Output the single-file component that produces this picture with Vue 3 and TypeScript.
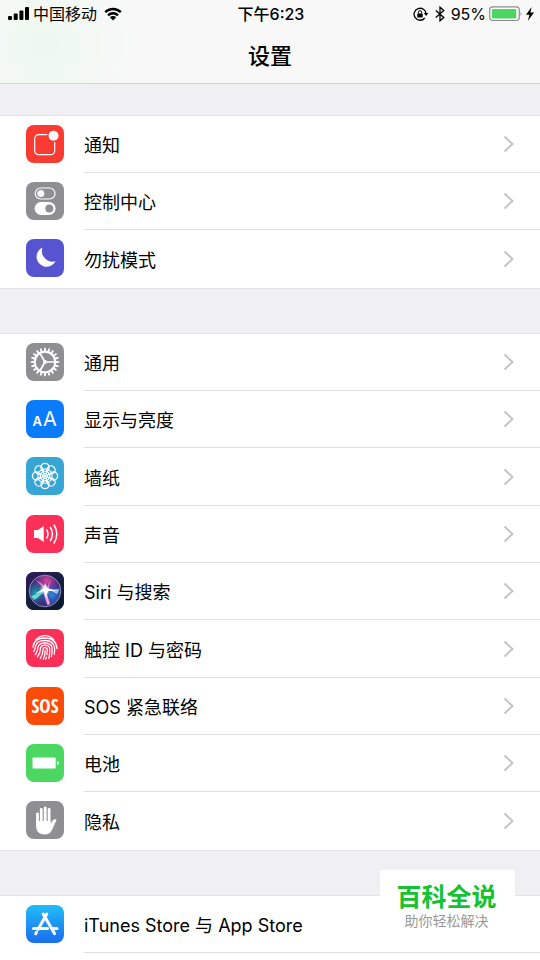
<script setup lang="ts">
type IconName =
  | 'notify' | 'control' | 'moon' | 'gear' | 'display' | 'wallpaper' | 'sound'
  | 'siri' | 'touch' | 'sos' | 'battery' | 'hand' | 'store'

interface Item {
  icon: IconName
  label: string
}

const groups: Item[][] = [
  [
    { icon: 'notify', label: '通知' },
    { icon: 'control', label: '控制中心' },
    { icon: 'moon', label: '勿扰模式' },
  ],
  [
    { icon: 'gear', label: '通用' },
    { icon: 'display', label: '显示与亮度' },
    { icon: 'wallpaper', label: '墙纸' },
    { icon: 'sound', label: '声音' },
    { icon: 'siri', label: 'Siri 与搜索' },
    { icon: 'touch', label: '触控 ID 与密码' },
    { icon: 'sos', label: 'SOS 紧急联络' },
    { icon: 'battery', label: '电池' },
    { icon: 'hand', label: '隐私' },
  ],
  [{ icon: 'store', label: 'iTunes Store 与 App Store' }],
]

const turns = (count: number): number[] =>
  Array.from({ length: count }, (_, i) => (i * 360) / count)

const teeth = turns(20)
const petals = turns(8)
</script>

<template>
  <div class="page">
    <header class="top">
      <div class="status">
        <div class="status-left">
          <svg class="signal" viewBox="0 0 22 14" aria-hidden="true">
            <rect x="0" y="9" width="4" height="4" rx="1" />
            <rect x="5.700" y="6.500" width="4" height="6.500" rx="1" />
            <rect x="11.400" y="3.500" width="4" height="9.500" rx="1" />
            <rect x="17" y="0" width="4" height="13" rx="1" />
          </svg>
          <span>中国移动</span>
          <svg class="wifi" viewBox="0 0 18 14" aria-hidden="true">
            <path d="M1.200 5.200a11.200 11.200 0 0 1 15.600 0M4 8.300a7.300 7.300 0 0 1 10 0" fill="none" stroke="#000" stroke-width="2.400" />
            <path d="M5.800 10.300a4.600 4.600 0 0 1 6.400 0L9 13.500z" />
          </svg>
        </div>
        <time class="clock">下午6:23</time>
        <div class="status-right">
          <svg class="lock" viewBox="0 0 16 14" aria-hidden="true">
            <path d="M11.800 11a6 6 0 1 1 1.300-4" fill="none" stroke="#000" stroke-width="1.300" />
            <path d="M10.800 6h4.600l-2.300 3z" />
            <rect x="4.300" y="6.400" width="5.400" height="4" rx=".5" />
            <path d="M5.400 6.600V5.300a1.600 1.600 0 0 1 3.200 0v1.300" fill="none" stroke="#000" stroke-width="1" />
          </svg>
          <svg class="bluetooth" viewBox="0 0 10 16" aria-hidden="true">
            <path d="M.8 4.500l8 7L5 14.800V1.200l3.800 3.300-8 7" fill="none" stroke="#000" stroke-width="1.300" />
          </svg>
          <span>95%</span>
          <svg class="charge" viewBox="0 0 34 16" aria-hidden="true">
            <rect x=".7" y=".9" width="29.600" height="13.600" rx="3.200" fill="#fff" stroke="#8c8c8c" stroke-width="1.200" />
            <rect x="2.800" y="3" width="24.500" height="9.500" rx="1.200" fill="#4cd562" />
            <path d="M31.600 5.500q1.800 2.200 0 4.400z" fill="#8c8c8c" />
          </svg>
          <svg class="bolt" viewBox="0 0 8 14" aria-hidden="true">
            <path d="M5.600 0L0 7.800h3.500L1.800 14 8 5.600H4.400z" />
          </svg>
        </div>
      </div>
      <h1>设置</h1>
    </header>

    <main class="content">
      <ul v-for="(group, g) in groups" :key="g" class="group">
        <li v-for="item in group" :key="item.icon">
          <a class="row" href="#">
            <span class="icon" :class="item.icon">
              <svg viewBox="0 0 38 38" aria-hidden="true">
                <template v-if="item.icon === 'notify'">
                  <rect x="8.700" y="9.700" width="20" height="20" rx="4" class="line" stroke-width="1.200" />
                  <circle cx="27.500" cy="10.800" r="6.500" fill="#fb3a32" />
                  <circle cx="27.500" cy="10.800" r="5" fill="#fff" />
                </template>

                <template v-else-if="item.icon === 'control'">
                  <rect x="9.200" y="6" width="19.800" height="11" rx="5.500" class="line" stroke-width="1.200" />
                  <circle cx="14.800" cy="11.500" r="3.500" fill="#fff" />
                  <rect x="8.600" y="20" width="21" height="13" rx="6.500" fill="#fff" />
                  <circle cx="23.300" cy="26.500" r="4" fill="#8e8e93" />
                </template>

                <path v-else-if="item.icon === 'moon'" d="M16.500 8.600A10 10 0 1 0 29.500 22.300 10.700 10.700 0 0 1 16.500 8.600z" fill="#fff" />

                <template v-else-if="item.icon === 'gear'">
                  <path
                    v-for="a in teeth"
                    :key="a"
                    d="M17.900 8.200L18.200 4.700h1.600l.3 3.500z"
                    fill="#fff"
                    :transform="`rotate(${a} 19 19)`"
                  />
                  <circle cx="19" cy="19" r="10.200" class="line" stroke-width="2" />
                  <path d="M19 19h10M19 19l-5.200-9M19 19l-5.200 9" class="line" stroke-width="1.700" />
                  <circle cx="19" cy="19" r="1.900" fill="#fff" />
                </template>

                <template v-else-if="item.icon === 'display'">
                  <text x="6.500" y="25.500" class="letter" font-size="13" font-weight="600">A</text>
                  <text x="17" y="25.500" class="letter" font-size="20">A</text>
                </template>

                <template v-else-if="item.icon === 'wallpaper'">
                  <g v-for="a in petals" :key="a" :transform="`rotate(${a} 19 19)`">
                    <circle cx="19" cy="10.400" r="4" class="line" stroke-width="1.300" />
                    <path d="M19 17q-3.600-2.600-2-5h4q1.600 2.400-2 5" class="line" stroke-width="1" />
                  </g>
                  <circle cx="19" cy="19" r="1.800" fill="#fff" />
                </template>

                <template v-else-if="item.icon === 'sound'">
                  <path d="M8 15h4l5.700-4v16L12 23H8z" fill="#fff" />
                  <path d="M20.500 14.500q3 4.500 0 9M24.200 12q4.500 7 0 14M27.800 9.500q6 9.500 0 19" class="line" stroke-width="1.500" />
                </template>

                <template v-else-if="item.icon === 'siri'">
                  <defs>
                    <linearGradient id="siri-bg" x1="0" y1="0" x2=".6" y2="1">
                      <stop offset="0" stop-color="#35195c" />
                      <stop offset=".55" stop-color="#152042" />
                      <stop offset="1" stop-color="#0c1b33" />
                    </linearGradient>
                    <radialGradient id="siri-pink" cx="21" cy="9" r="13" gradientUnits="userSpaceOnUse">
                      <stop offset="0" stop-color="#d9489f" />
                      <stop offset="1" stop-color="#c030a0" stop-opacity="0" />
                    </radialGradient>
                    <radialGradient id="siri-teal" cx="10" cy="21" r="12" gradientUnits="userSpaceOnUse">
                      <stop offset="0" stop-color="#17a8b0" />
                      <stop offset="1" stop-color="#1580b0" stop-opacity="0" />
                    </radialGradient>
                    <radialGradient id="siri-blue" cx="26" cy="23" r="13" gradientUnits="userSpaceOnUse">
                      <stop offset="0" stop-color="#2e8fe0" />
                      <stop offset="1" stop-color="#304cc8" stop-opacity="0" />
                    </radialGradient>
                    <radialGradient id="siri-glow" cx="19" cy="18" r="6" gradientUnits="userSpaceOnUse">
                      <stop offset="0" stop-color="#fff" />
                      <stop offset="1" stop-color="#fff" stop-opacity="0" />
                    </radialGradient>
                  </defs>
                  <rect width="38" height="38" fill="url(#siri-bg)" />
                  <circle cx="19" cy="19" r="15.500" fill="#3d2a78" />
                  <circle cx="19" cy="19" r="15.500" fill="url(#siri-pink)" />
                  <circle cx="19" cy="19" r="15.500" fill="url(#siri-teal)" />
                  <circle cx="19" cy="19" r="15.500" fill="url(#siri-blue)" />
                  <path d="M5 24q8-2 14-7-4 7-11 11z" fill="#7ff0e0" opacity=".8" />
                  <path d="M19 16.500q7 1.500 14 .5 0 3-2 5-5-3-12-5.500z" fill="#a5e4ff" opacity=".8" />
                  <path d="M17.500 19q1 7 4 14l2.600-1q-2-6-4-13z" fill="#f6a3e0" />
                  <path d="M18 18Q14 11 9 8q7 2 12 9 1-5 4-9-2 6-3 10z" fill="#f5a3e8" opacity=".7" />
                  <circle cx="19" cy="18" r="6" fill="url(#siri-glow)" />
                  <path d="M9 22l9-6 1-5 2 5 10 3-9 0-2 7-2-7z" fill="#fff" />
                  <circle cx="19" cy="19" r="15.800" fill="none" stroke="#9c9bc2" stroke-width=".9" />
                </template>

                <g v-else-if="item.icon === 'touch'" class="line" stroke-width="1.300" stroke-linecap="round">
                  <path d="M9.800 10.800Q14 6.500 19.500 6.700q4.800.2 8.200 4" />
                  <path d="M7 18q1-9 12-9 11 0 12 10.500" />
                  <path d="M7.700 22.500q1.700-3 1.700-5 1-6 9.600-6t9.600 7.500q.2 3-.4 6" />
                  <path d="M9.300 25.500q2.600-3.500 2.600-7.300 1-4.200 7.100-4.200 7.200 0 7.200 6 0 4-.8 7.500" />
                  <path d="M11.500 27.800q3-4 3-8.800 1-2.800 4.500-2.800 4.800 0 4.800 4.300 0 5-1 8.800" />
                  <path d="M14.300 29.500q2.800-4.500 2.800-9.500.4-1.500 2-1.500 2.200 0 2.200 2.500 0 2.500-.4 4.700M20.400 28.200l-.5 2" />
                  <path d="M19.200 21.500q0 5-1.900 9" />
                </g>

                <text v-else-if="item.icon === 'sos'" x="19" y="25.500" class="sos-text" text-anchor="middle">SOS</text>

                <template v-else-if="item.icon === 'battery'">
                  <rect x="6.500" y="13.600" width="23.200" height="11" rx="1" fill="#fff" />
                  <path d="M31 17q1.800 0 1.800 2.100T31 21.200z" fill="#fff" />
                </template>

                <template v-else-if="item.icon === 'hand'">
                  <path d="M11.500 13v11M15.300 8.500V21M19.200 7v14M23.100 8.500V22" class="line" stroke-width="2.800" stroke-linecap="round" />
                  <path d="M10.100 20h14.400v3.200c1.500-3 2.600-5 5-4.900q1.400.2.900 1.300c-1.500 2.600-2.500 5.600-4 8.600-1.600 3.500-3.800 5.300-7.700 5.300-6.200 0-8.600-3.500-8.600-9.500z" fill="#fff" />
                </template>

                <template v-else>
                  <path d="M20.800 9L12 24.400M17.200 9L28.500 28.600M10.500 27.200L9.700 28.700" class="line" stroke-width="3" stroke-linecap="round" />
                  <path d="M7.500 23.600h14M27 23.600h4" class="line" stroke-width="3" stroke-linecap="round" />
                </template>
              </svg>
            </span>
            <span class="label">
              <span class="name">{{ item.label }}</span>
              <svg class="chevron" viewBox="0 0 12 18" aria-hidden="true">
                <path d="M1.500 1.500L9.500 9l-8 7.500" fill="none" stroke="#c4c4c9" stroke-width="2" />
              </svg>
            </span>
          </a>
        </li>
      </ul>
    </main>

    <aside class="badge">
      <strong>百科全说</strong>
      <span>助你轻松解决</span>
    </aside>
  </div>
</template>

<style>
body {
  margin: 0;
}
</style>

<style scoped>
.page {
  position: relative;
  display: flex;
  flex-direction: column;
  min-height: 100vh;
  background: #efeff4;
  color: #000;
  font-family: Inter, "Noto Sans CJK SC", sans-serif;
}

.top {
  box-sizing: border-box;
  height: 84px;
  border-bottom: 1px solid #d3d3d8;
  background: radial-gradient(circle at 44px 44px, #edf8ef 0, #f8f8f9 90px);
}

.status {
  display: grid;
  grid-template-columns: 1fr auto 1fr;
  align-items: center;
  height: 28px;
  padding: 0 6px 0 8px;
  font-size: 16px;
  line-height: 20px;
}

.status-left,
.status-right {
  display: flex;
  align-items: center;
}

.status-left {
  gap: 3px;
}

.status-right {
  justify-content: flex-end;
  gap: 3px;
}

.clock {
  font-weight: 500;
}

.signal {
  width: 22px;
  height: 14px;
}

.wifi {
  width: 18px;
  height: 14px;
  margin-left: 4px;
}

.lock {
  width: 16px;
  height: 14px;
}

.bluetooth {
  width: 10px;
  height: 16px;
  margin: 0 3px;
}

.charge {
  width: 34px;
  height: 16px;
}

.bolt {
  width: 8px;
  height: 14px;
}

h1 {
  margin: 0;
  padding-top: 12px;
  font-size: 22px;
  font-weight: 500;
  line-height: 32px;
  text-align: center;
}

.content {
  display: flex;
  flex: 1;
  flex-direction: column;
  gap: 46px;
  padding-top: 32px;
}

.group {
  margin: 0;
  padding: 0;
  background: #fff;
  box-shadow: 0 0 0 1px #e2e2e7;
  list-style: none;
}

.group:last-child {
  flex: 1;
}

.row {
  display: flex;
  gap: 20px;
  height: 57px;
  padding-left: 26px;
  color: inherit;
  text-decoration: none;
}

li:nth-child(3n) .row {
  height: 58px;
}

.icon {
  flex: none;
  width: 38px;
  height: 38px;
  margin-top: 9px;
  overflow: hidden;
  border-radius: 8px;
}

.icon svg {
  display: block;
}

.label {
  display: flex;
  flex: 1;
  align-items: center;
  justify-content: space-between;
  box-sizing: border-box;
  height: 100%;
  padding-right: 25px;
  border-bottom: 1px solid #dfdfe3;
  font-size: 18px;
  line-height: 24px;
}

.name {
  padding-top: 4px;
}

.group:not(:last-child) li:last-child .label {
  border-bottom-color: transparent;
}

.chevron {
  width: 12px;
  height: 18px;
}

.line {
  fill: none;
  stroke: #fff;
}

.letter {
  fill: #fff;
  font-family: Inter, sans-serif;
}

.sos-text {
  fill: #fff;
  font-family: "Liberation Sans Narrow", "Open Sans Condensed", Roboto, sans-serif;
  font-size: 19px;
  font-weight: 700;
}

.notify { background: #fb3a32; }
.control,
.gear,
.hand { background: #8e8e93; }
.moon { background: #5754d2; }
.display { background: #0a7bfb; }
.wallpaper { background: #37a6d4; }
.sound,
.touch { background: #fc2f58; }
.siri { background: #152042; }
.sos { background: #fb4b08; }
.battery { background: #4cd763; }
.store { background: linear-gradient(#20bcf7, #1b6dee); }

.badge {
  position: absolute;
  right: 25px;
  bottom: 25px;
  display: flex;
  flex-direction: column;
  align-items: center;
  box-sizing: border-box;
  width: 135px;
  height: 65px;
  padding: 11px 2px 0 0;
  border-radius: 2px;
  background: #fff;
}

.badge strong {
  color: #14c232;
  font-size: 25px;
  font-weight: 700;
  line-height: 32px;
}

.badge span {
  color: #999;
  font-size: 14px;
  line-height: 16px;
}
</style>
